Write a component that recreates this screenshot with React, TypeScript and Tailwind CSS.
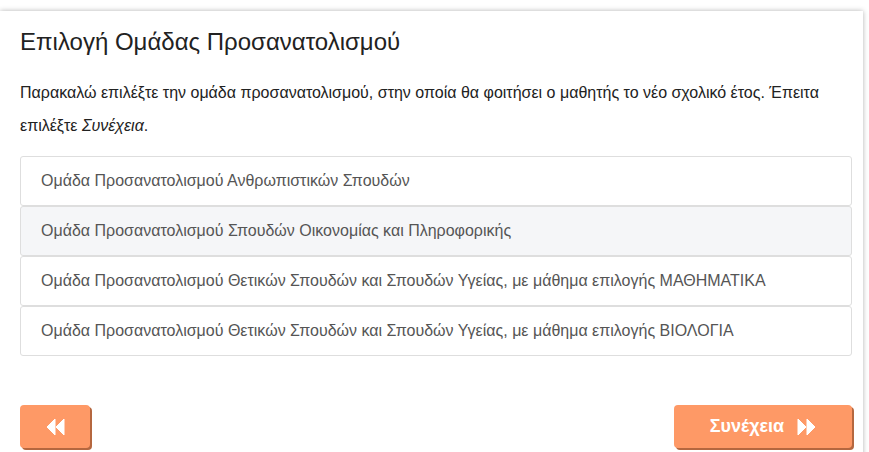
import React, { useState } from "react";

const GROUPS = [
  "Ομάδα Προσανατολισμού Ανθρωπιστικών Σπουδών",
  "Ομάδα Προσανατολισμού Σπουδών Οικονομίας και Πληροφορικής",
  "Ομάδα Προσανατολισμού Θετικών Σπουδών και Σπουδών Υγείας, με μάθημα επιλογής ΜΑΘΗΜΑΤΙΚΑ",
  "Ομάδα Προσανατολισμού Θετικών Σπουδών και Σπουδών Υγείας, με μάθημα επιλογής ΒΙΟΛΟΓΙΑ",
];

function DoubleLeft() {
  return (
    <svg width="19" height="18" viewBox="0 0 19 18" fill="white">
      <path d="M9 1 L9 17 L1 9 Z" strokeLinejoin="round" stroke="white" strokeWidth="1" />
      <path d="M18 1 L18 17 L10 9 Z" strokeLinejoin="round" stroke="white" strokeWidth="1" />
    </svg>
  );
}

function DoubleRight() {
  return (
    <svg width="19" height="18" viewBox="0 0 19 18" fill="white">
      <path d="M1 1 L1 17 L9 9 Z" strokeLinejoin="round" stroke="white" strokeWidth="1" />
      <path d="M10 1 L10 17 L18 9 Z" strokeLinejoin="round" stroke="white" strokeWidth="1" />
    </svg>
  );
}

export default function App() {
  const [hovered, setHovered] = useState<number | null>(1);

  return (
    <div className="w-[869px] h-[452px] overflow-hidden bg-white pt-[11px] font-['Liberation_Sans',Arial,sans-serif]">
      <div className="w-[863px] h-[460px] bg-white shadow-[0_0_5px_rgba(0,0,0,0.3)] pl-5 pr-[11px] pt-[16px]">
        <h3 className="text-[24px] leading-[30px] text-[#222]">
          Επιλογή Ομάδας Προσανατολισμού
        </h3>
        <p className="mt-[19px] text-[16px] leading-[33px] text-[#222]">
          Παρακαλώ επιλέξτε την ομάδα προσανατολισμού, στην οποία θα φοιτήσει ο
          μαθητής το νέο σχολικό έτος. Έπειτα επιλέξτε <i>Συνέχεια</i>.
        </p>
        <div className="mt-[14px] flex flex-col">
          {GROUPS.map((g, i) => (
            <div
              key={g}
              onMouseEnter={() => setHovered(i)}
              className={
                "h-[50px] flex items-center px-5 border border-[#dedede] rounded-[3px] text-[16px] text-[#555] cursor-pointer " +
                (hovered === i ? "bg-[#f5f6f8]" : "bg-white")
              }
            >
              {g}
            </div>
          ))}
        </div>
        <div className="mt-[49px] flex justify-between">
          <button className="w-[70px] h-[43px] rounded-[4px] bg-[#fe9966] shadow-[2px_2px_0_#b5673f] flex items-center justify-center">
            <DoubleLeft />
          </button>
          <button className="w-[178px] h-[43px] rounded-[4px] bg-[#fe9966] shadow-[2px_2px_0_#b5673f] flex items-center justify-center gap-[13px] text-white font-bold text-[18px]">
            Συνέχεια
            <DoubleRight />
          </button>
        </div>
      </div>
    </div>
  );
}
